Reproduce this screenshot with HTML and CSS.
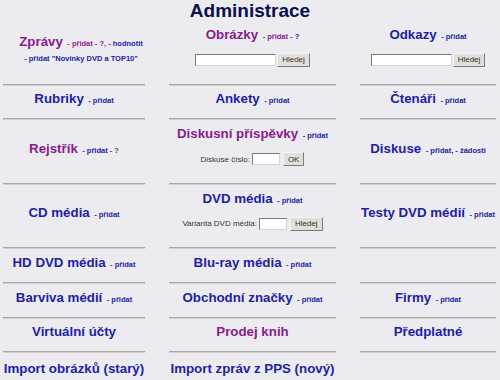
FILE: index.html
```html
<!DOCTYPE html>
<html lang="cs">
<head>
  <meta charset="UTF-8">
  <meta name="viewport" content="width=device-width, initial-scale=1.0">
  <title>Administrace</title>
  <link rel="stylesheet" href="styles.css">
</head>
<body>

  <h1 class="title">Administrace</h1>

  <div class="grid">
    <!-- row 1 -->
    <div class="cell">
      <div class="body shift">
        <div><a href="#" class="big seen">Zprávy</a> <span class="small"><a href="#" class="seen">- přidat - ?,</a> <a href="#">- hodnotit</a></span></div>
        <div class="sub"><a href="#">- přidat "Novinky DVD a TOP10"</a></div>
      </div>
      <hr>
    </div>
    <div class="cell">
      <div class="body">
        <div><a href="#" class="big seen">Obrázky</a> <span class="small"><a href="#" class="seen">- přidat -</a> <a href="#">?</a></span></div>
        <form class="search" onsubmit="event.preventDefault()">
          <input type="text" class="field wide">
          <button type="submit" class="btn">Hledej</button>
        </form>
      </div>
      <hr>
    </div>
    <div class="cell">
      <div class="body">
        <div><a href="#" class="big">Odkazy</a> <span class="small"><a href="#">- přidat</a></span></div>
        <form class="search" onsubmit="event.preventDefault()">
          <input type="text" class="field wide">
          <button type="submit" class="btn">Hledej</button>
        </form>
      </div>
      <hr>
    </div>

    <!-- row 2 -->
    <div class="cell">
      <div class="body"><div><a href="#" class="big">Rubriky</a> <span class="small"><a href="#">- přidat</a></span></div></div>
      <hr>
    </div>
    <div class="cell">
      <div class="body"><div><a href="#" class="big">Ankety</a> <span class="small"><a href="#">- přidat</a></span></div></div>
      <hr>
    </div>
    <div class="cell">
      <div class="body"><div><a href="#" class="big">Čtenáři</a> <span class="small"><a href="#">- přidat</a></span></div></div>
      <hr>
    </div>

    <!-- row 3 -->
    <div class="cell">
      <div class="body"><div><a href="#" class="big seen">Rejstřík</a> <span class="small"><a href="#">- přidat</a> <a href="#" class="seen">- ?</a></span></div></div>
      <hr>
    </div>
    <div class="cell">
      <div class="body">
        <div><a href="#" class="big seen">Diskusní příspěvky</a> <span class="small"><a href="#">- přidat</a></span></div>
        <form class="search" onsubmit="event.preventDefault()">
          <label for="diskuse">Diskuse číslo:</label>
          <input type="text" id="diskuse" class="field">
          <button type="submit" class="btn">OK</button>
        </form>
      </div>
      <hr>
    </div>
    <div class="cell">
      <div class="body"><div><a href="#" class="big">Diskuse</a> <span class="small"><a href="#">- přidat,</a> <a href="#">- žádosti</a></span></div></div>
      <hr>
    </div>

    <!-- row 4 -->
    <div class="cell">
      <div class="body"><div><a href="#" class="big">CD média</a> <span class="small"><a href="#">- přidat</a></span></div></div>
      <hr>
    </div>
    <div class="cell">
      <div class="body">
        <div><a href="#" class="big">DVD média</a> <span class="small"><a href="#">- přidat</a></span></div>
        <form class="search" onsubmit="event.preventDefault()">
          <label for="varianta">Varianta DVD média:</label>
          <input type="text" id="varianta" class="field">
          <button type="submit" class="btn">Hledej</button>
        </form>
      </div>
      <hr>
    </div>
    <div class="cell">
      <div class="body"><div><a href="#" class="big">Testy DVD médií</a> <span class="small"><a href="#">- přidat</a></span></div></div>
      <hr>
    </div>

    <!-- row 5 -->
    <div class="cell">
      <div class="body"><div><a href="#" class="big">HD DVD média</a> <span class="small"><a href="#">- přidat</a></span></div></div>
      <hr>
    </div>
    <div class="cell">
      <div class="body"><div><a href="#" class="big">Blu-ray média</a> <span class="small"><a href="#">- přidat</a></span></div></div>
      <hr>
    </div>
    <div class="cell">
      <div class="body"></div>
      <hr>
    </div>

    <!-- row 6 -->
    <div class="cell">
      <div class="body"><div><a href="#" class="big">Barviva médií</a> <span class="small"><a href="#">- přidat</a></span></div></div>
      <hr>
    </div>
    <div class="cell">
      <div class="body"><div><a href="#" class="big">Obchodní značky</a> <span class="small"><a href="#">- přidat</a></span></div></div>
      <hr>
    </div>
    <div class="cell">
      <div class="body"><div><a href="#" class="big">Firmy</a> <span class="small"><a href="#">- přidat</a></span></div></div>
      <hr>
    </div>

    <!-- row 7 -->
    <div class="cell">
      <div class="body"><a href="#" class="big">Virtuální účty</a></div>
      <hr>
    </div>
    <div class="cell">
      <div class="body"><a href="#" class="big seen">Prodej knih</a></div>
      <hr>
    </div>
    <div class="cell">
      <div class="body"><a href="#" class="big">Předplatné</a></div>
      <hr>
    </div>

    <!-- row 8 -->
    <div class="cell">
      <div class="body"><a href="#" class="big">Import obrázků (starý)</a></div>
    </div>
    <div class="cell">
      <div class="body"><a href="#" class="big">Import zpráv z PPS (nový)</a></div>
    </div>
    <div class="cell">
      <div class="body"></div>
    </div>
  </div>

</body>
</html>
```

FILE: styles.css
```css
body {
  margin: 0;
  background-color: #ececf0;
  font-family: "Liberation Sans", Arial, sans-serif;
  overflow: hidden;
}

.title {
  margin: 0 0 -2px 0;
  font-size: 19px;
  line-height: 22px;
  text-align: center;
  color: #0d0d4f;
}

.grid {
  display: grid;
  grid-template-columns: 142px 167px 136px;
  grid-template-rows: 66px 34px 65px 64px 35px 35px 34px 30px;
  column-gap: 24px;
  padding-left: 3px;
}

.cell {
  display: flex;
  flex-direction: column;
  min-width: 0;
}

.body {
  flex: 1;
  display: flex;
  flex-direction: column;
  justify-content: center;
  align-items: center;
  text-align: center;
  white-space: nowrap;
}

.shift {
  padding-left: 14px;
}

.cell hr {
  margin: 8px 0 0 0;
  height: 0;
  border: none;
  border-top: 1px solid #a9a7a5;
  border-bottom: 1px solid #d2d0ce;
}

a {
  color: #2121a8;
  text-decoration: none;
  font-weight: bold;
}

a.seen {
  color: #8a1a8e;
}

.big {
  font-size: 13.3px;
  line-height: 15px;
}

.small {
  font-size: 7.5px;
}

.sub {
  margin-top: 4px;
  font-size: 7.5px;
  line-height: 10px;
}

.search {
  display: flex;
  align-items: center;
  margin: 10px 0 5px 0;
  font-size: 8px;
  color: #333;
}

.search label {
  margin-right: 2px;
}

.field {
  width: 28px;
  height: 12px;
  padding: 0;
  box-sizing: border-box;
  background-color: #fff;
  border: 1px solid;
  border-color: #7a7a7a #d4d4d4 #d4d4d4 #7a7a7a;
}

.field.wide {
  width: 81px;
}

.btn {
  appearance: none;
  height: 14px;
  margin-left: 3px;
  padding: 0 4px;
  box-sizing: border-box;
  background-color: #e2ded9;
  border: 1px solid;
  border-color: #f6f4f2 #7d7b79 #7d7b79 #f6f4f2;
  font-family: "Liberation Sans", Arial, sans-serif;
  font-size: 8px;
  color: #333;
  cursor: pointer;
}

.search .field.wide + .btn {
  margin-left: 1px;
}
```
